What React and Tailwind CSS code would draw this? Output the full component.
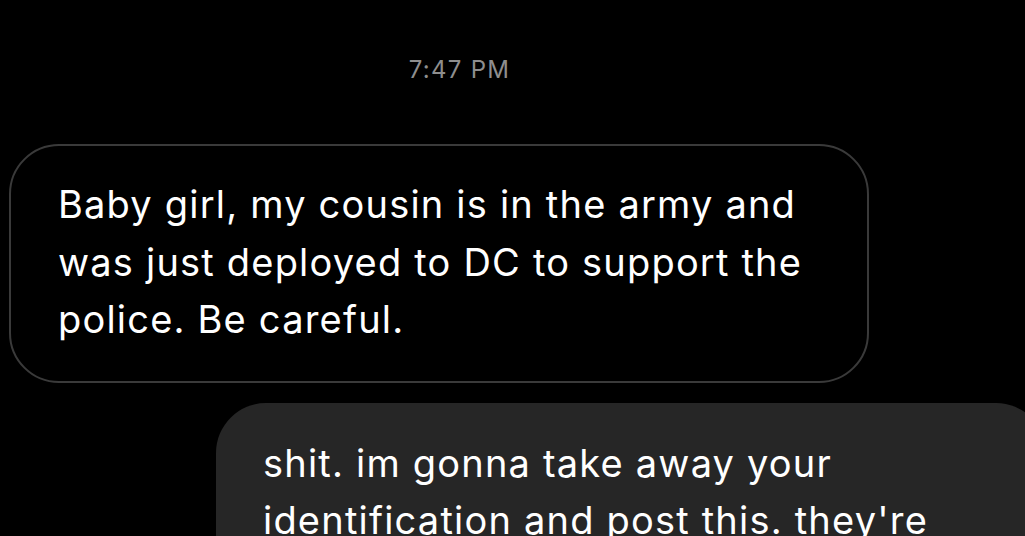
export default function App() {
    return (
        <div
            className="h-[536px] w-[1025px] overflow-hidden bg-black"
            style={{ fontFamily: 'Inter, "Noto Sans", sans-serif' }}
        >
            {/* Timestamp */}
            <div className="pt-[56px] text-center text-[24px] leading-[28px] tracking-[1.3px] text-[#8e8e8e] pr-[106px]">
                7:47 PM
            </div>

            {/* Received message */}
            <div className="mt-[60px] ml-[9px] w-[860px] rounded-[50px] border-[2.5px] border-[#3a3a3a] px-[47px] pt-[30px] pb-[32px]">
                <p className="text-[38px] leading-[57.5px] tracking-[1.2px] text-white">
                    Baby girl, my cousin is in the army and was just deployed to DC to support the police. Be careful.
                </p>
            </div>

            {/* Sent message */}
            <div className="mt-[20px] ml-[216px] w-[830px] rounded-[50px] bg-[#262626] px-[47px] pt-[32px] pb-[40px]">
                <p className="text-[38px] leading-[57.5px] tracking-[1.2px] text-white">
                    shit. im gonna take away your identification and post this. they're
                </p>
            </div>
        </div>
    );
}
